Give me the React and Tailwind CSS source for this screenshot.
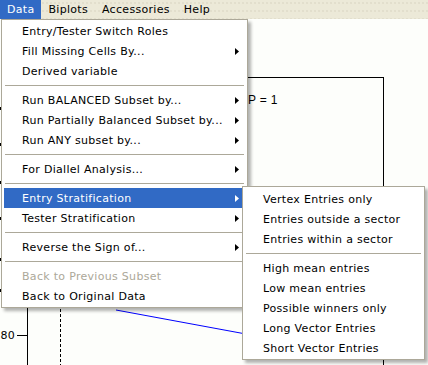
import React from "react";

const mainItems = [
  { label: "Entry/Tester Switch Roles" },
  { label: "Fill Missing Cells By...", sub: true },
  { label: "Derived variable" },
  { sep: true },
  { label: "Run BALANCED Subset by...", sub: true },
  { label: "Run Partially Balanced Subset by...", sub: true },
  { label: "Run ANY subset by...", sub: true },
  { sep: true },
  { label: "For Diallel Analysis...", sub: true },
  { sep: true },
  { label: "Entry Stratification", sub: true, active: true },
  { label: "Tester Stratification", sub: true },
  { sep: true },
  { label: "Reverse the Sign of...", sub: true },
  { sep: true },
  { label: "Back to Previous Subset", disabled: true },
  { label: "Back to Original Data" },
];

const subItems = [
  { label: "Vertex Entries only" },
  { label: "Entries outside a sector" },
  { label: "Entries within a sector" },
  { sep: true },
  { label: "High mean entries" },
  { label: "Low mean entries" },
  { label: "Possible winners only" },
  { label: "Long Vector Entries" },
  { label: "Short Vector Entries" },
];

const Arrow = ({ white }) => (
  <svg width="4" height="7" viewBox="0 0 4 7" className="shrink-0">
    <polygon points="0,0 4,3.5 0,7" fill={white ? "#ffffff" : "#000000"} />
  </svg>
);

const MenuList = ({ items }) =>
  items.map((item, i) =>
    item.sep ? (
      <div key={i} className="h-[9px] pt-[4px] mx-px">
        <div className="h-px bg-[#ACA899]"></div>
      </div>
    ) : (
      <div
        key={i}
        className={
          "h-5 flex items-center justify-between pl-[18px] pr-[6px] whitespace-nowrap " +
          (item.active
            ? "bg-[#316AC5] text-white"
            : item.disabled
            ? "text-[#ACA899]"
            : "text-black")
        }
      >
        <span>{item.label}</span>
        {item.sub && <Arrow white={item.active} />}
      </div>
    )
  );

// left edge tick marks peeking out behind the menu
const edgeTicks = [88, 124, 162, 198, 239, 270];

const App = () => {
  return (
    <div className="relative w-[428px] h-[365px] overflow-hidden bg-[#FDFEFB] font-['DejaVu_Sans',sans-serif] text-[11px] tracking-[0.3px] leading-none select-none">
      {/* Menu bar */}
      <div className="h-[19px] flex bg-[#ECE9D8] bg-[radial-gradient(circle,#d6d2bf_0.6px,transparent_0.8px)] bg-[length:4px_8px] bg-[position:1px_-1px]">
        <div className="h-full px-[7px] flex items-center bg-[#316AC5] text-white">Data</div>
        <div className="h-full px-[7px] flex items-center text-black">Biplots</div>
        <div className="h-full px-[7px] flex items-center text-black">Accessories</div>
        <div className="h-full px-[7px] flex items-center text-black">Help</div>
      </div>

      {/* Plot canvas */}
      <svg width="428" height="346" className="block" shapeRendering="crispEdges">
        <line x1="100" y1="58.5" x2="383.5" y2="58.5" stroke="#000" />
        <line x1="383.5" y1="58" x2="383.5" y2="346" stroke="#000" />
        <text x="248" y="85" fontFamily="Liberation Sans, Arial, sans-serif" fontSize="12" fill="#000">
          P = 1
        </text>
        <line x1="116" y1="291" x2="300" y2="325" stroke="#0000ff" shapeRendering="auto" />
        <line x1="27.5" y1="280" x2="27.5" y2="346" stroke="#000" />
        <line x1="17" y1="316.5" x2="27" y2="316.5" stroke="#000" />
        <text x="15" y="320" textAnchor="end" fontFamily="DejaVu Sans, sans-serif" fontSize="11" fill="#000">
          80
        </text>
        <line x1="60.5" y1="280" x2="60.5" y2="346" stroke="#000" strokeDasharray="3 2" />
        {edgeTicks.map((y) => (
          <rect key={y} x="0" y={y} width="1" height="3" fill="#000" />
        ))}
      </svg>

      {/* Data menu */}
      <div className="absolute left-px top-[19px] w-[247px] bg-white border border-[#ACA899] pt-px pb-px px-[2px] shadow-[3px_3px_3px_rgba(0,0,0,0.3)]">
        <MenuList items={mainItems} />
      </div>

      {/* Entry Stratification submenu */}
      <div className="absolute left-[242px] top-[186px] w-[183px] bg-white border border-[#ACA899] pt-[2px] pb-px px-[2px] shadow-[3px_3px_3px_rgba(0,0,0,0.3)]">
        <MenuList items={subItems} />
      </div>
    </div>
  );
};

export default App;
